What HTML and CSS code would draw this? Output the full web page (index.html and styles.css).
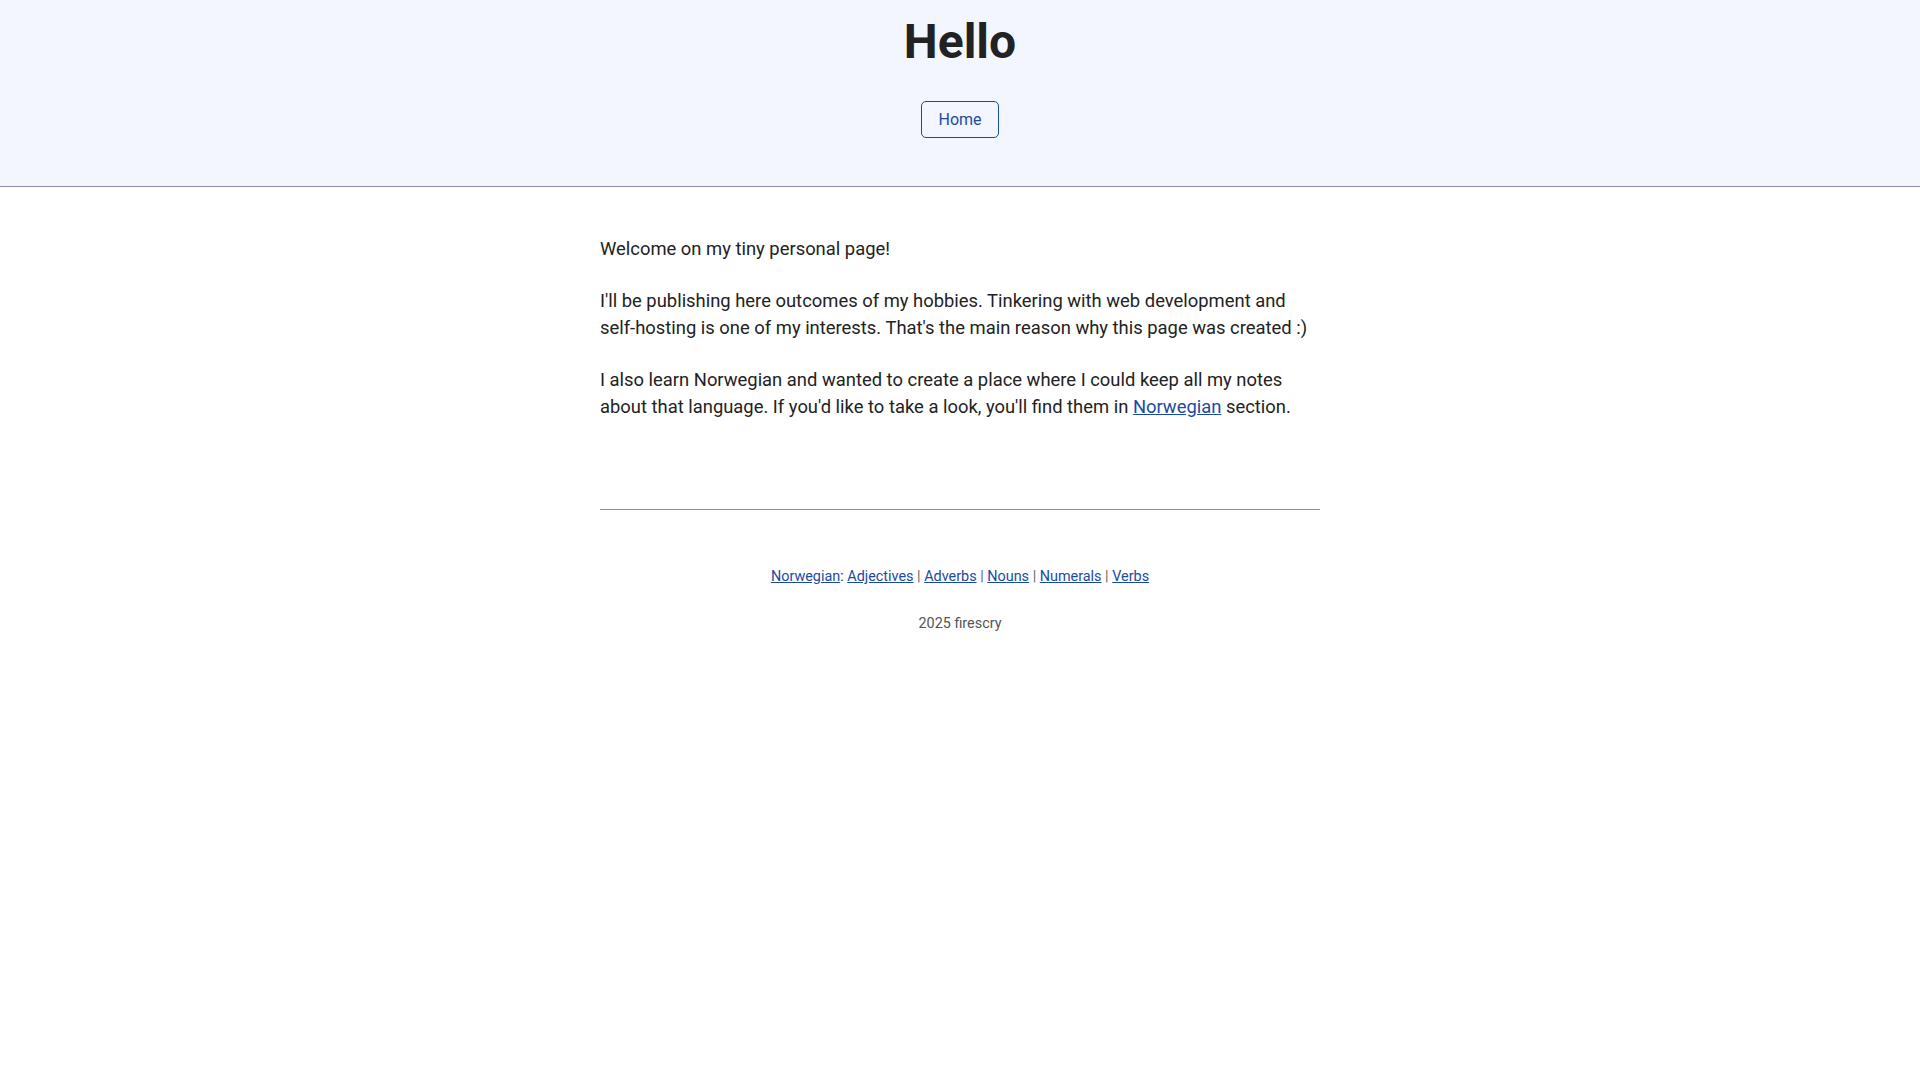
FILE: index.html
```html
<!DOCTYPE html>
<html lang="en">
<head>
  <meta charset="UTF-8" />
  <meta name="viewport" content="width=device-width, initial-scale=1.0" />
  <title>Hello</title>
  <link rel="stylesheet" href="styles.css">
</head>
<body>
  <header class="top">
    <h1>Hello</h1>
    <nav class="menu">
      <a class="menu-btn" href="#">Home</a>
    </nav>
  </header>

  <main class="content">
    <p>Welcome on my tiny personal page!</p>
    <p>I'll be publishing here outcomes of my hobbies. Tinkering with web development and self-hosting is one of my interests. That's the main reason why this page was created :)</p>
    <p>I also learn Norwegian and wanted to create a place where I could keep all my notes about that language. If you'd like to take a look, you'll find them in <a href="#">Norwegian</a> section.</p>
  </main>

  <footer class="bottom">
    <p class="links">
      <a href="#">Norwegian</a>: <a href="#">Adjectives</a> <span class="sep">|</span> <a href="#">Adverbs</a> <span class="sep">|</span> <a href="#">Nouns</a> <span class="sep">|</span> <a href="#">Numerals</a> <span class="sep">|</span> <a href="#">Verbs</a>
    </p>
    <p class="copy">2025 firescry</p>
  </footer>
</body>
</html>
```
FILE: styles.css
```css
body {
  margin: 0;
  background: #fff;
  color: #222;
  font-family: Roboto, "Noto Sans", sans-serif;
  font-size: 18.4px;
  line-height: 27px;
}
a {
  color: #1a4ba3;
}
.top {
  background: #f3f6fe;
  border-bottom: 1px solid #8e8ea8;
  text-align: center;
  padding: 14px 0 48px;
}
.top h1 {
  margin: 0;
  font-size: 48px;
  line-height: 56px;
  font-weight: 700;
  color: #222;
}
.menu {
  margin-top: 31px;
}
.menu-btn {
  display: inline-block;
  padding: 8px 16px;
  font-size: 16px;
  line-height: 19px;
  border: 1px solid #1a4ba3;
  border-radius: 5px;
  text-decoration: none;
}
.content {
  max-width: 720px;
  margin: 0 auto;
  padding-top: 23px;
}
.content p {
  margin: 25px 0;
}
.bottom {
  max-width: 720px;
  margin: 89px auto 0;
  border-top: 1px solid #8e8ea8;
  padding-top: 31px;
  text-align: center;
  font-size: 14.4px;
  line-height: 22px;
}
.bottom p {
  margin: 25px 0;
}
.sep {
  color: #666;
}
.copy {
  color: #555;
}
```
